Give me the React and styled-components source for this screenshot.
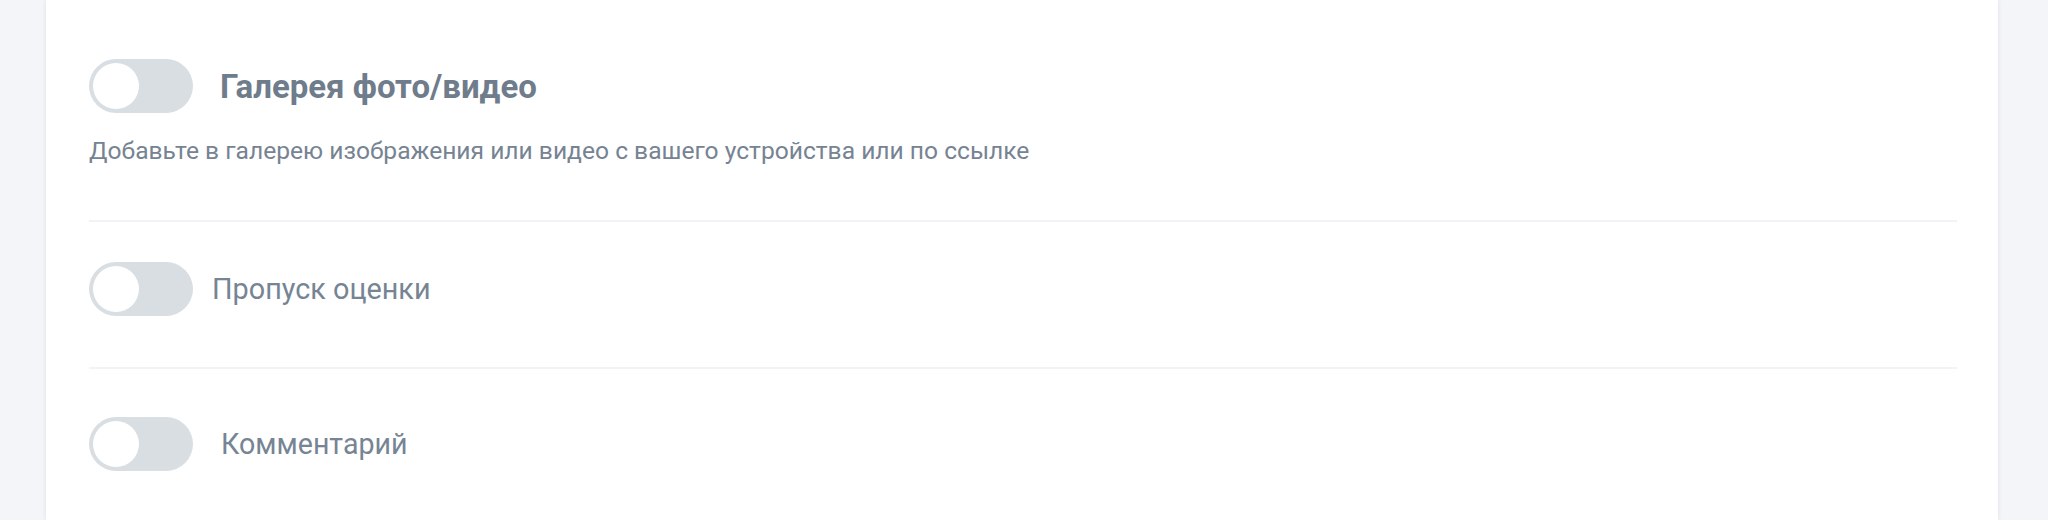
import React from "react";
import styled, { createGlobalStyle } from "styled-components";

const GlobalStyle = createGlobalStyle`
  body {
    margin: 0;
    background: #f3f5f8;
    font-family: Roboto, "Liberation Sans", sans-serif;
  }
`;

const Page = styled.div`
  height: 520px;
  overflow: hidden;
  padding: 0 50px 0 46px;
`;

const Card = styled.div`
  background: #ffffff;
  height: 100%;
  padding: 0 41px 0 43px;
  box-shadow: 0 0 4px rgba(120, 135, 155, 0.18);
`;

const Section = styled.div`
  padding-top: ${(p) => p.top}px;
  padding-bottom: ${(p) => p.bottom || 0}px;
  border-bottom: ${(p) => (p.divider ? "2px solid #f1f3f6" : "none")};
`;

const Row = styled.div`
  display: flex;
  align-items: center;
  gap: ${(p) => p.gap}px;
`;

const Track = styled.div`
  width: 104px;
  height: 54px;
  flex-shrink: 0;
  box-sizing: border-box;
  border-radius: 27px;
  background: #d9dee3;
  padding: 4px;
  display: flex;
  align-items: center;
`;

const Knob = styled.div`
  width: 46px;
  height: 46px;
  border-radius: 50%;
  background: #ffffff;
`;

const Title = styled.div`
  font-size: 33px;
  font-weight: 700;
  color: #6f7c8b;
`;

const Label = styled.div`
  font-size: ${(p) => p.size}px;
  color: #768493;
`;

const Description = styled.div`
  margin-top: 23px;
  font-size: 24.6px;
  line-height: 30px;
  color: #768392;
`;

const Toggle = () => (
  <Track>
    <Knob />
  </Track>
);

export default function App() {
  return (
    <>
      <GlobalStyle />
      <Page>
        <Card>
          <Section top={59} bottom={54} divider>
            <Row gap={27}>
              <Toggle />
              <Title>Галерея фото/видео</Title>
            </Row>
            <Description>
              Добавьте в галерею изображения или видео с вашего устройства или по ссылке
            </Description>
          </Section>
          <Section top={40} bottom={51} divider>
            <Row gap={19}>
              <Toggle />
              <Label size={28.8}>Пропуск оценки</Label>
            </Row>
          </Section>
          <Section top={48}>
            <Row gap={28}>
              <Toggle />
              <Label size={28.6}>Комментарий</Label>
            </Row>
          </Section>
        </Card>
      </Page>
    </>
  );
}
